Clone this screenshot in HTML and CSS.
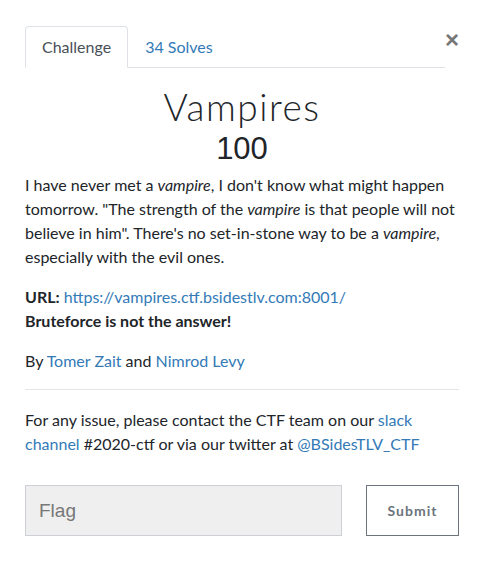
FILE: index.html
```html
<!DOCTYPE html>
<html>
<head>
<meta charset="utf-8">
<link rel="stylesheet" href="styles.css">
</head>
<body>
<div class="modal">
  <div class="header">
    <ul class="tabs">
      <li class="tab active">Challenge</li>
      <li class="tab"><a href="#">34 Solves</a></li>
    </ul>
    <span class="close">&times;</span>
  </div>
  <h2 class="title">Vampires</h2>
  <h3 class="points">100</h3>
  <div class="desc">
    <p>I have never met a <em>vampire</em>, I don't know what might happen tomorrow. "The strength of the <em>vampire</em> is that people will not believe in him". There's no set-in-stone way to be a <em>vampire</em>, especially with the evil ones.</p>
    <p><strong>URL:</strong> <a href="#">https://vampires.ctf.bsidestlv.com:8001/</a><br><strong>Bruteforce is not the answer!</strong></p>
    <p>By <a href="#">Tomer Zait</a> and <a href="#">Nimrod Levy</a></p>
    <hr>
    <p>For any issue, please contact the CTF team on our <a href="#">slack channel</a> #2020-ctf or via our twitter at <a href="#">@BSidesTLV_CTF</a></p>
  </div>
  <div class="form">
    <input class="flag" type="text" placeholder="Flag">
    <button class="submit">Submit</button>
  </div>
</div>
</body>
</html>
```
FILE: styles.css
```css
html, body {
  margin: 0;
  padding: 0;
  background: #fff;
}
body {
  font-family: Lato, "Noto Sans", sans-serif;
  font-size: 16px;
  line-height: 24px;
  color: #212529;
}
a {
  color: #337ab7;
  text-decoration: none;
}
.modal {
  padding: 26px 27px 0 25px;
}
.header {
  display: flex;
  align-items: flex-start;
}
.tabs {
  flex: 1;
  display: flex;
  list-style: none;
  margin: 0;
  padding: 0;
  border-bottom: 1px solid #dee2e6;
}
.tab {
  padding: 8px 16px;
  border: 1px solid transparent;
  border-top-left-radius: 4px;
  border-top-right-radius: 4px;
  margin-bottom: -1px;
}
.tab.active {
  color: #495057;
  border-color: #dee2e6 #dee2e6 #fff;
  background: #fff;
}
.close {
  width: 14px;
  font-family: "Liberation Sans", Arial, sans-serif;
  font-size: 24px;
  font-weight: bold;
  line-height: 24px;
  color: #777;
  text-align: right;
  margin-top: 2px;
}
.title {
  margin: 17px 0 0;
  text-align: center;
  font-family: Lato, sans-serif;
  font-weight: 300;
  font-size: 37px;
  line-height: 43px;
  letter-spacing: 1.5px;
}
.points {
  margin: 3px 0 0;
  text-align: center;
  font-family: "Liberation Sans", Arial, sans-serif;
  font-weight: 400;
  font-size: 31px;
  line-height: 35px;
}
.desc {
  margin-top: 7px;
}
.desc p {
  margin: 0 0 16px;
}
hr {
  border: 0;
  border-top: 1px solid #e5e5e5;
  margin: 12px 0 18px;
}
.form {
  display: flex;
  gap: 24px;
  margin-top: 29px;
}
.flag {
  flex: 1;
  height: 51px;
  box-sizing: border-box;
  border: 1px solid #ccd0d4;
  background: #efefef;
  padding: 0 13px;
  font-family: "Liberation Sans", Arial, sans-serif;
  font-size: 19px;
  color: #555;
  border-radius: 0;
  outline: none;
}
.flag::placeholder {
  color: #777;
}
.submit {
  width: 93px;
  height: 51px;
  box-sizing: border-box;
  background: #fff;
  border: 1px solid #6c757d;
  border-radius: 0;
  font-family: Lato, sans-serif;
  font-weight: bold;
  font-size: 14px;
  letter-spacing: 1px;
  color: #6c757d;
}
```
